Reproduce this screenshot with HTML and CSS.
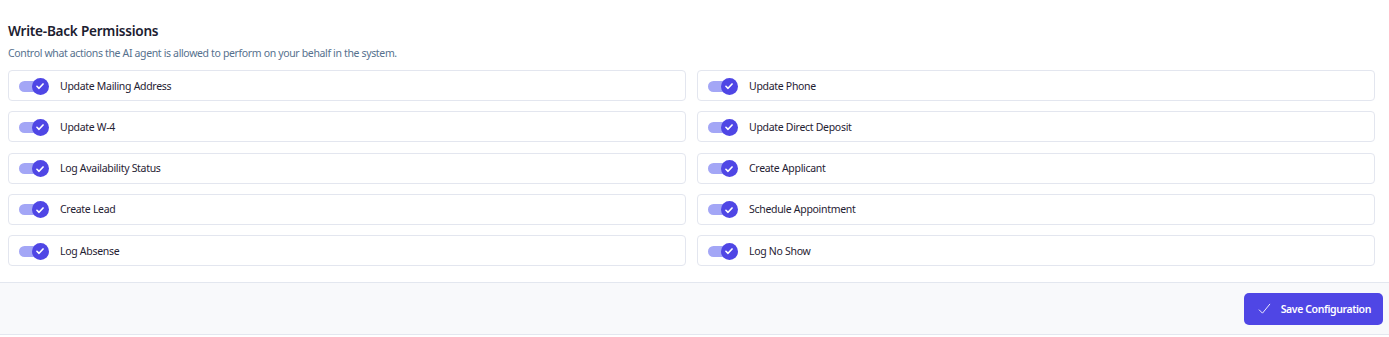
FILE: index.html
```html
<!DOCTYPE html>
<html lang="en">
<head>
  <meta charset="UTF-8">
  <title>Write-Back Permissions</title>
  <link rel="stylesheet" href="styles.css">
</head>
<body>
  <section class="permisos">
    <h2 class="titulo">Write-Back Permissions</h2>
    <p class="subtitulo">Control what actions the AI agent is allowed to perform on your behalf in the system.</p>

    <div class="grid-permisos">
      <label class="permiso"><span class="toggle"><span class="knob"><svg viewBox="0 0 16 16"><path d="M4.5 8.3l2.4 2.3 4.6-4.9"/></svg></span></span>Update Mailing Address</label>
      <label class="permiso"><span class="toggle"><span class="knob"><svg viewBox="0 0 16 16"><path d="M4.5 8.3l2.4 2.3 4.6-4.9"/></svg></span></span>Update Phone</label>
      <label class="permiso"><span class="toggle"><span class="knob"><svg viewBox="0 0 16 16"><path d="M4.5 8.3l2.4 2.3 4.6-4.9"/></svg></span></span>Update W-4</label>
      <label class="permiso"><span class="toggle"><span class="knob"><svg viewBox="0 0 16 16"><path d="M4.5 8.3l2.4 2.3 4.6-4.9"/></svg></span></span>Update Direct Deposit</label>
      <label class="permiso"><span class="toggle"><span class="knob"><svg viewBox="0 0 16 16"><path d="M4.5 8.3l2.4 2.3 4.6-4.9"/></svg></span></span>Log Availability Status</label>
      <label class="permiso"><span class="toggle"><span class="knob"><svg viewBox="0 0 16 16"><path d="M4.5 8.3l2.4 2.3 4.6-4.9"/></svg></span></span>Create Applicant</label>
      <label class="permiso"><span class="toggle"><span class="knob"><svg viewBox="0 0 16 16"><path d="M4.5 8.3l2.4 2.3 4.6-4.9"/></svg></span></span>Create Lead</label>
      <label class="permiso"><span class="toggle"><span class="knob"><svg viewBox="0 0 16 16"><path d="M4.5 8.3l2.4 2.3 4.6-4.9"/></svg></span></span>Schedule Appointment</label>
      <label class="permiso"><span class="toggle"><span class="knob"><svg viewBox="0 0 16 16"><path d="M4.5 8.3l2.4 2.3 4.6-4.9"/></svg></span></span>Log Absense</label>
      <label class="permiso"><span class="toggle"><span class="knob"><svg viewBox="0 0 16 16"><path d="M4.5 8.3l2.4 2.3 4.6-4.9"/></svg></span></span>Log No Show</label>
    </div>
  </section>

  <footer class="pie">
    <button class="boton-guardar">
      <svg viewBox="0 0 16 16"><path d="M1.5 8.5l4 4 9-11"/></svg>
      Save Configuration
    </button>
  </footer>
</body>
</html>
```

FILE: styles.css
```css
body {
  margin: 0;
  font-family: "Noto Sans", "Open Sans", sans-serif;
  background: #ffffff;
  color: #1f2330;
}

.permisos {
  padding: 21px 14px 16px 8px;
}

.titulo {
  margin: 0;
  font-size: 13.6px;
  font-weight: 600;
  line-height: 20px;
  letter-spacing: -0.25px;
  color: #1c2030;
}

.subtitulo {
  margin: 4px 0 9px;
  font-size: 10.5px;
  line-height: 16px;
  letter-spacing: -0.35px;
  color: #56718e;
}

.grid-permisos {
  display: grid;
  grid-template-columns: 1fr 1fr;
  column-gap: 11px;
  row-gap: 10.3px;
}

.permiso {
  display: flex;
  align-items: center;
  gap: 12px;
  height: 31px;
  box-sizing: border-box;
  padding: 0 0 0 10px;
  border: 1px solid #e3e6ef;
  border-radius: 4px;
  font-size: 10.5px;
  letter-spacing: -0.3px;
  color: #1f2233;
}

.toggle {
  position: relative;
  width: 29px;
  height: 11px;
  margin-top: 1px;
  border-radius: 6px;
  background: #a3a6f6;
}

.knob {
  position: absolute;
  right: -0.5px;
  top: -3px;
  width: 17px;
  height: 17px;
  border-radius: 50%;
  background: #4f46e5;
  display: flex;
  align-items: center;
  justify-content: center;
}

.knob svg {
  width: 14px;
  height: 14px;
  fill: none;
  stroke: #ffffff;
  stroke-width: 1.9;
  stroke-linecap: round;
  stroke-linejoin: round;
}

.pie {
  display: flex;
  justify-content: flex-end;
  padding: 10px 6px 9px;
  background: #f8f9fb;
  border-top: 1px solid #e3e7ef;
  border-bottom: 1px solid #e3e7ef;
}

.boton-guardar {
  display: flex;
  align-items: center;
  gap: 10px;
  height: 32px;
  padding: 0 12px 0 14px;
  border: none;
  border-radius: 5px;
  background: #4f46e5;
  color: #ffffff;
  font-family: "Noto Sans", "Open Sans", sans-serif;
  font-size: 10.5px;
  font-weight: 600;
  letter-spacing: -0.4px;
  cursor: pointer;
}

.boton-guardar svg {
  width: 13px;
  height: 13px;
  fill: none;
  stroke: #ffffff;
  stroke-width: 1.1;
  stroke-linecap: round;
  stroke-linejoin: round;
}
```
